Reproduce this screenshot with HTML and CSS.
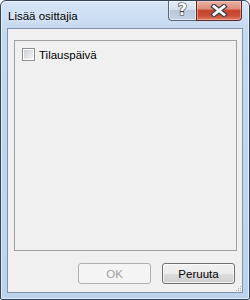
FILE: index.html
```html
<!DOCTYPE html>
<html>
<head>
<meta charset="utf-8">
<link rel="stylesheet" href="styles.css">
</head>
<body>
<div class="window">
  <div class="titlebar">
    <span class="title">Lisää osittajia</span>
    <div class="caption-buttons">
      <div class="cbtn help"><span class="qmark">?</span></div>
      <div class="cbtn close">
        <svg width="20" height="13" viewBox="0 0 20 13">
          <path d="M5 2.5 L15 10.5 M15 2.5 L5 10.5" stroke="#3a3f46" stroke-width="5.2" stroke-linecap="square"/>
          <path d="M5 2.5 L15 10.5 M15 2.5 L5 10.5" stroke="#ffffff" stroke-width="2.8" stroke-linecap="square"/>
        </svg>
      </div>
    </div>
  </div>
  <div class="client">
    <div class="group">
      <label class="check-row">
        <span class="checkbox"><span class="checkbox-inner"></span></span>
        <span class="label">Tilauspäivä</span>
      </label>
    </div>
    <div class="buttons">
      <div class="btn disabled">OK</div>
      <div class="btn">Peruuta</div>
    </div>
    <div class="grip">
      <svg width="7" height="7" viewBox="0 0 7 7">
        <rect x="5" y="1" width="1" height="1" fill="#a8b0ba"/>
        <rect x="3" y="3" width="1" height="1" fill="#a8b0ba"/>
        <rect x="5" y="3" width="1" height="1" fill="#a8b0ba"/>
        <rect x="1" y="5" width="1" height="1" fill="#a8b0ba"/>
        <rect x="3" y="5" width="1" height="1" fill="#a8b0ba"/>
        <rect x="5" y="5" width="1" height="1" fill="#a8b0ba"/>
      </svg>
    </div>
  </div>
</div>
</body>
</html>
```
FILE: styles.css
```css
html, body {
  margin: 0;
  padding: 0;
  background: #ffffff;
}
body {
  width: 250px;
  height: 300px;
  overflow: hidden;
  font-family: "Liberation Sans", Arial, sans-serif;
}
.window {
  box-sizing: border-box;
  width: 250px;
  height: 300px;
  border: 1px solid #34455a;
  border-radius: 6px 6px 2px 2px;
  background: linear-gradient(#d6e5f6 0px, #c5d9ef 28px, #bcd3ed 100%);
  padding: 0 6px 6px 6px;
  display: flex;
  flex-direction: column;
  box-shadow: inset 0 0 0 1px rgba(255,255,255,0.55);
}
.titlebar {
  height: 27px;
  display: flex;
  align-items: flex-start;
  padding-left: 1px;
}
.title {
  font-size: 11.5px;
  color: #000000;
  margin-top: 9px;
  text-shadow: 0 0 6px rgba(255,255,255,0.9);
}
.caption-buttons {
  margin-left: auto;
  display: flex;
  height: 20px;
  margin-right: 1px;
}
.cbtn {
  box-sizing: border-box;
  height: 20px;
  display: flex;
  align-items: center;
  justify-content: center;
  border: 1px solid #56677c;
  border-top: none;
}
.help {
  width: 28px;
  border-radius: 0 0 0 4px;
  border-right: none;
  background: linear-gradient(#e6eef7 0%, #d3dfec 45%, #b8c9dc 50%, #c3d3e4 100%);
  box-shadow: inset 0 0 0 1px rgba(255,255,255,0.5);
}
.qmark {
  font-family: "DejaVu Sans", sans-serif;
  font-weight: bold;
  font-size: 16px;
  line-height: 16px;
  color: #ffffff;
  -webkit-text-stroke: 1.2px #3a3f46;
  paint-order: stroke fill;
  margin-top: -1px;
}
.close {
  width: 46px;
  border-radius: 0 0 4px 0;
  border-color: #5c2a22;
  background: linear-gradient(#eab2a6 0%, #df8e7c 40%, #c9452f 50%, #c94a34 75%, #dc7c67 100%);
  box-shadow: inset 0 0 0 1px rgba(255,220,210,0.45);
}
.close svg {
  display: block;
}
.client {
  flex: 1;
  position: relative;
  background: #f0f0f0;
  border: 1px solid #7f93ad;
  display: flex;
  flex-direction: column;
  padding: 11px 5px 8px 6px;
}
.group {
  box-sizing: border-box;
  height: 211px;
  border: 1px solid #a0a0a0;
  padding: 7px 7px;
}
.check-row {
  display: flex;
  align-items: center;
  height: 13px;
}
.checkbox {
  box-sizing: border-box;
  width: 13px;
  height: 13px;
  border: 1px solid #8e8f8f;
  background: #ffffff;
  padding: 1px;
  display: block;
}
.checkbox-inner {
  display: block;
  width: 100%;
  height: 100%;
  background: linear-gradient(135deg, #cbcfd5 0%, #e4e6e9 60%, #f6f6f6 100%);
  border: 0;
}
.label {
  margin-left: 4px;
  font-size: 11.5px;
  color: #000000;
}
.buttons {
  display: flex;
  justify-content: flex-end;
  gap: 11px;
  margin-top: 12px;
  padding-right: 2px;
}
.btn {
  box-sizing: border-box;
  width: 73px;
  height: 21px;
  border: 1px solid #707070;
  border-radius: 3px;
  background: linear-gradient(#f2f2f2 0%, #ebebeb 50%, #dddddd 51%, #cfcfcf 100%);
  box-shadow: inset 0 0 0 1px rgba(255,255,255,0.7);
  font-size: 11.5px;
  color: #000000;
  display: flex;
  align-items: center;
  justify-content: center;
}
.btn.disabled {
  background: #f4f4f4;
  border-color: #adb2b5;
  color: #a0a0a0;
  box-shadow: none;
}
.grip {
  position: absolute;
  right: 0;
  bottom: 0;
  width: 7px;
  height: 7px;
}
.grip svg {
  display: block;
}
```
